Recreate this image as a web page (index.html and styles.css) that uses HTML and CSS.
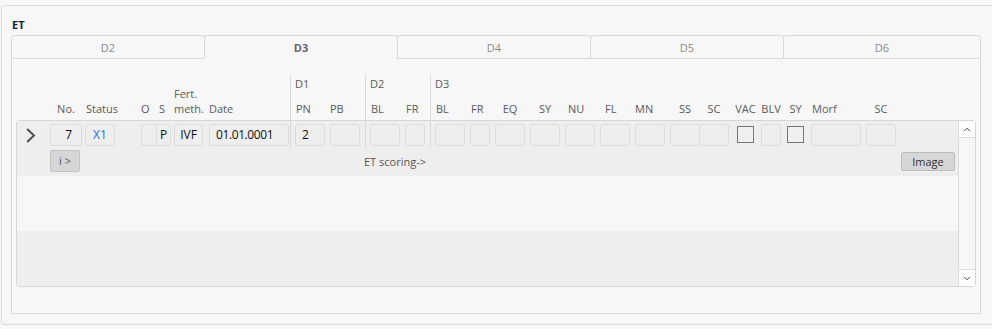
FILE: index.html
```html
<!DOCTYPE html>
<html lang="en">
<head>
<meta charset="utf-8">
<title>ET</title>
<link rel="stylesheet" href="styles.css">
</head>
<body>
<div class="frame">
  <div class="title">ET</div>
  <div class="tabs">
    <div class="tab">D2</div>
    <div class="tab active">D3</div>
    <div class="tab">D4</div>
    <div class="tab">D5</div>
    <div class="tab last">D6</div>
  </div>
  <div class="panel">
    <div class="head">
      <div class="hc k-chev"></div>
      <div class="hc k-no c">No.</div>
      <div class="hc k-status">Status</div>
      <div class="hc k-o p0">O</div>
      <div class="hc k-s p3">S</div>
      <div class="hc k-meth p0">Fert.<br>meth.</div>
      <div class="hc k-date p0">Date</div>
      <div class="grp d1">
        <div class="gt">D1</div>
        <div class="gcols">
          <div class="hc k30">PN</div>
          <div class="hc k30 p0">PB</div>
        </div>
      </div>
      <div class="grp">
        <div class="gt">D2</div>
        <div class="gcols">
          <div class="hc k30">BL</div>
          <div class="hc k20">FR</div>
        </div>
      </div>
      <div class="grp">
        <div class="gt">D3</div>
        <div class="gcols">
          <div class="hc k30">BL</div>
          <div class="hc k20">FR</div>
          <div class="hc k30 c">EQ</div>
          <div class="hc k30 c">SY</div>
          <div class="hc k30 p3">NU</div>
          <div class="hc k30 p5">FL</div>
          <div class="hc k30 p0">MN</div>
          <div class="hc k30 c">SS</div>
          <div class="hc k30 k-sc c">SC</div>
          <div class="hc k-vac c">VAC</div>
          <div class="hc k-blv c">BLV</div>
          <div class="hc k-sy c">SY</div>
          <div class="hc k-morf">Morf</div>
          <div class="hc k30 c">SC</div>
        </div>
      </div>
    </div>

    <div class="grid">
      <div class="rows">
        <div class="row odd">
          <div class="line1">
            <div class="cell k-chev">
              <svg class="chev" width="10" height="15" viewBox="0 0 10 15"><path d="M1.2 1 L8 7.5 L1.2 14" fill="none" stroke="#505050" stroke-width="2"/></svg>
            </div>
            <div class="cell k-no"><div class="box num">7</div></div>
            <div class="cell k-status"><div class="box ctr link">X1</div></div>
            <div class="cell k-o"><div class="box join-l"></div></div>
            <div class="cell k-s"><div class="box join-r ctr">P</div></div>
            <div class="cell k-meth"><div class="box ctr">IVF</div></div>
            <div class="cell k-date"><div class="box date">01.01.0001</div></div>
            <div class="grp d1">
              <div class="gcols">
                <div class="cell k30"><div class="box">2</div></div>
                <div class="cell k30"><div class="box"></div></div>
              </div>
            </div>
            <div class="grp">
              <div class="gcols">
                <div class="cell k30"><div class="box"></div></div>
                <div class="cell k20"><div class="box"></div></div>
              </div>
            </div>
            <div class="grp">
              <div class="gcols">
                <div class="cell k30"><div class="box"></div></div>
                <div class="cell k20"><div class="box"></div></div>
                <div class="cell k30"><div class="box"></div></div>
                <div class="cell k30"><div class="box"></div></div>
                <div class="cell k30"><div class="box"></div></div>
                <div class="cell k30"><div class="box"></div></div>
                <div class="cell k30"><div class="box"></div></div>
                <div class="cell k30"><div class="box"></div></div>
                <div class="cell k30 k-sc"><div class="box"></div></div>
                <div class="cell k-vac"><div class="chk"></div></div>
                <div class="cell k-blv"><div class="box"></div></div>
                <div class="cell k-sy"><div class="chk"></div></div>
                <div class="cell k-morf"><div class="box"></div></div>
                <div class="cell k30"><div class="box"></div></div>
              </div>
            </div>
          </div>
          <div class="line2">
            <div class="btn btn-i">i &gt;</div>
            <div class="hint">ET scoring-&gt;</div>
            <div class="btn btn-image">Image</div>
          </div>
        </div>
        <div class="row even"></div>
        <div class="row odd"></div>
      </div>
      <div class="vscroll">
        <div class="sbtn up"><svg width="8" height="5" viewBox="0 0 8 5"><path d="M1 4.2 L4 1.2 L7 4.2" fill="none" stroke="#444" stroke-width="1"/></svg></div>
        <div class="sbtn down"><svg width="8" height="5" viewBox="0 0 8 5"><path d="M1 0.8 L4 3.8 L7 0.8" fill="none" stroke="#444" stroke-width="1"/></svg></div>
      </div>
    </div>
  </div>
</div>
</body>
</html>
```

FILE: styles.css
```css
* { box-sizing: border-box; }

body {
  margin: 0;
  background: #f7f7f7;
  font-family: "Open Sans", "Noto Sans", sans-serif;
  font-size: 11px;
  color: #333;
  overflow: hidden;
}

.frame {
  margin: 5px -10px 0 1px;
  border: 1px solid #dcdcdc;
  border-radius: 3px;
  padding: 11px 0 10px 9px;
}

.title {
  font-weight: 700;
  line-height: 15px;
  color: #0f1e3c;
  padding-left: 1px;
}

/* tabs */
.tabs {
  display: flex;
  width: 970px;
  margin-top: 3px;
}
.tab {
  width: 194px;
  height: 24px;
  border: 1px solid #dadada;
  border-radius: 3px 3px 0 0;
  text-align: center;
  line-height: 23px;
  color: #8a8a8a;
}
.tab + .tab { margin-left: -1px; }
.tab.last { flex: 1; }
.tab.active {
  border-bottom-color: transparent;
  font-weight: 700;
  color: #666;
}

.panel {
  width: 970px;
  border: 1px solid #dadada;
  border-top: none;
  padding: 16px 4px 26px;
}

/* columns */
.k-chev { width: 28px; }
.k-no { width: 32px; }
.k-status { width: 30px; margin-left: -2px; }
.k-o { width: 15px; margin-left: 21px; }
.k-s { width: 15px; margin-left: -5px; }
.k-meth { width: 29px; margin-left: -2px; }
.k-date { width: 80px; margin-left: 1px; }
.k30 { width: 30px; }
.k20 { width: 20px; }
.k-sc { margin-left: -6px; }
.k-vac { width: 17px; margin-left: 3px; }
.k-blv { width: 20px; margin-left: 2px; }
.k-sy { width: 17px; margin-left: 1px; }
.k-morf { width: 50px; margin-left: 2px; }

/* header */
.head {
  display: flex;
  gap: 5px;
  height: 45px;
  padding-left: 1px;
}
.hc {
  display: flex;
  align-items: flex-end;
  justify-content: flex-start;
  padding: 0 0 4px 1px;
  line-height: 15px;
  color: #5a5a5a;
  white-space: nowrap;
  flex: none;
}
.hc.c { justify-content: center; padding-left: 0; }
.hc.p0 { padding-left: 0; }
.hc.p3 { padding-left: 3px; }
.hc.p5 { padding-left: 5px; }

.grp {
  display: flex;
  flex-direction: column;
  border-left: 1px solid #d8d8d8;
  padding-left: 4px;
  flex: none;
}
.grp.d1 { margin-left: -4px; }
.gt {
  line-height: 15px;
  padding-top: 1px;
  color: #5a5a5a;
}
.gcols {
  display: flex;
  gap: 5px;
  margin-top: auto;
}
.head .gcols .hc { padding-bottom: 4px; }

/* grid */
.grid {
  display: flex;
  height: 167px;
  border: 1px solid #d6d6d6;
  border-radius: 3px;
}
.rows { flex: 1; }
.row { height: 55px; }
.row.odd { background: #eeeeee; }
.row.even { background: #f7f7f7; }

.line1 {
  display: flex;
  gap: 5px;
  height: 26px;
}
.line1 .grp .gcols { margin-top: 0; }
.cell {
  padding-top: 3px;
  flex: none;
}
.chev { display: block; margin: 4px 0 0 9px; }

.box {
  height: 22px;
  border: 1px solid #dcdcdc;
  border-radius: 3px;
  background: #eeeeee;
  line-height: 20px;
  font-size: 12px;
  color: #111;
  padding: 0 6px;
  white-space: nowrap;
  overflow: hidden;
}
.box.num { text-align: right; padding-right: 9px; }
.box.ctr { text-align: center; padding: 0; }
.box.link { color: #2f6fe0; }
.box.date { letter-spacing: -0.4px; }
.box.join-l { border-right: none; border-radius: 3px 0 0 3px; }
.box.join-r { border-radius: 0 3px 3px 0; }

.chk {
  width: 17px;
  height: 17px;
  margin-top: 2px;
  border: 1px solid #777;
  background: #f0f0f0;
}

.line2 {
  display: flex;
  align-items: flex-start;
  height: 29px;
}
.btn {
  border: 1px solid #c4c4c4;
  border-radius: 2px;
  background: #d6d6d6;
  text-align: center;
}
.btn-i {
  width: 30px;
  height: 22px;
  margin: 3px 0 0 33px;
  line-height: 20px;
  color: #555;
}
.hint {
  margin: 7px 0 0 284px;
  line-height: 15px;
  color: #555;
}
.btn-image {
  width: 54px;
  height: 19px;
  margin: 5px 3px 0 auto;
  line-height: 17px;
  color: #333;
  border-color: #bdbdbd;
}

.vscroll {
  width: 17px;
  border-left: 1px solid #dcdcdc;
  background: #f7f7f7;
  display: flex;
  flex-direction: column;
  justify-content: space-between;
}
.sbtn {
  height: 17px;
  background: #ffffff;
  display: flex;
  align-items: center;
  justify-content: center;
}
.sbtn.up { border-bottom: 1px solid #dcdcdc; }
.sbtn.down { border-top: 1px solid #dcdcdc; }
.sbtn svg { display: block; }
```
